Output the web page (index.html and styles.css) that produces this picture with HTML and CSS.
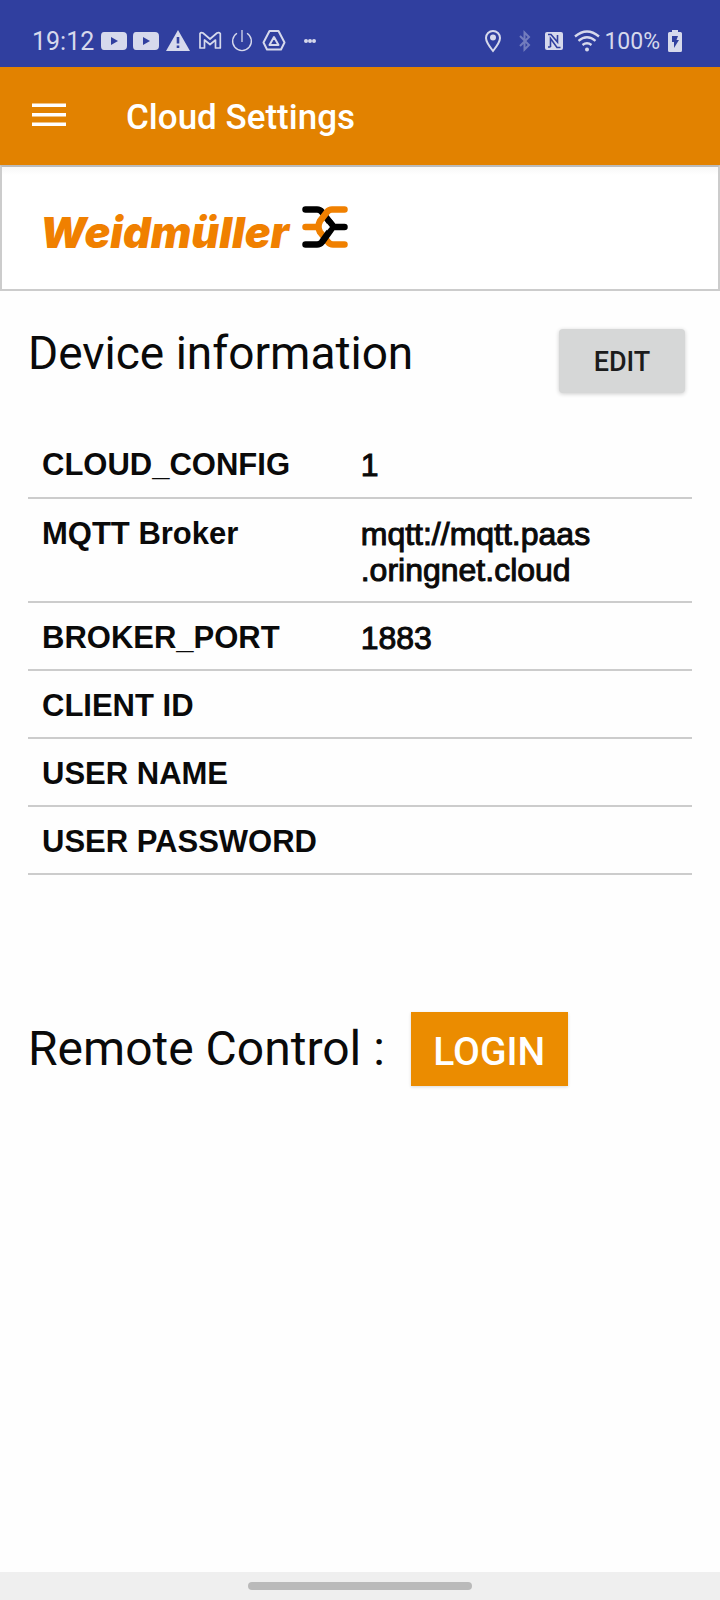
FILE: index.html
```html
<!DOCTYPE html>
<html lang="en">
<head>
<meta charset="utf-8">
<meta name="viewport" content="width=device-width, initial-scale=1">
<title>Cloud Settings</title>
<link rel="stylesheet" href="styles.css">
</head>
<body>
<div class="status">
  <span class="time">19:12</span>
  <svg class="left-icons" width="216" height="24" viewBox="0 0 216 24" fill="none" stroke="currentColor" aria-hidden="true">
    <g fill="currentColor" stroke="none">
      <path fill-rule="evenodd" d="M4 3H23Q27 3 27 7V17Q27 21 23 21H4Q1 21 1 17V7Q1 3 4 3ZM11 8V16L18 12Z"/>
      <path fill-rule="evenodd" d="M36 3H55Q59 3 59 7V17Q59 21 55 21H36Q33 21 33 17V7Q33 3 36 3ZM43 8V16L50 12Z"/>
      <path fill-rule="evenodd" d="M78 1L90 22H66ZM76.700 8V14.500H79.300V8ZM76.700 16.500V19H79.300V16.500Z"/>
      <circle cx="206" cy="12" r="2"/><circle cx="210" cy="12" r="2"/><circle cx="214" cy="12" r="2"/>
    </g>
    <path stroke-width="1.700" stroke-linejoin="round" d="M100 19V4.500Q101 3 103 4L110 10L117 4Q119 3 120.300 4.500V19H115.500V11L110 15.500L104.500 11V19Z"/>
    <path stroke-width="1.300" d="M142 1V13M137 4.200A9.400 9.400 0 1 0 147 4.200"/>
    <path stroke-width="2" stroke-linejoin="round" d="M169.500 2H178.500L184.500 13.500L181 20.500H167L163.500 13.500Z"/>
    <path stroke-width="2" stroke-linejoin="round" d="M174 8L178.500 16H169.500Z"/>
  </svg>
  <svg class="right-icons" width="118" height="24" viewBox="0 0 118 24" fill="none" stroke="currentColor" aria-hidden="true">
    <path stroke-width="2" d="M11 22C7 17 4 13 4 9A7 7 0 0 1 18 9C18 13 15 17 11 22Z"/>
    <circle cx="11" cy="8.500" r="3" fill="currentColor" stroke="none"/>
    <path class="dim" stroke-width="2" d="M38 7L47 16L42.500 20.500V3.500L47 8L38 17"/>
    <rect x="63" y="3" width="18" height="18" rx="2" fill="currentColor" stroke="none"/>
    <path class="cut" stroke-width="1.600" d="M66 5.500H69L75.500 13V6M68.500 18V9.500L75 18.500H78.500M68.500 18H66"/>
    <g stroke-width="2.300"><path d="M93 7.500Q105 -2.500 117 7.500"/><path d="M96.500 11.800Q105 4.800 113.500 11.800"/><path d="M100.500 16Q105 12.500 109.500 16"/></g>
    <circle cx="105" cy="20.500" r="2" fill="currentColor" stroke="none"/>
  </svg>
  <span class="percent">100%</span>
  <svg class="battery" width="14" height="24" viewBox="0 0 14 24" aria-hidden="true">
    <path fill="currentColor" fill-rule="evenodd" d="M4 1H10V3H12.500Q14 3 14 4.500V21.500Q14 23 12.500 23H1.500Q0 23 0 21.500V4.500Q0 3 1.500 3H4ZM4 7V13H6V19L11 11H8.500L10 7Z"/>
  </svg>
</div>
<header class="appbar">
  <button class="menu" type="button" aria-label="Menu">
    <svg width="34" height="24" viewBox="0 0 34 24" fill="currentColor"><path d="M0 .500H34V4H0ZM0 10H34V13.500H0ZM0 19.500H34V23H0Z"/></svg>
  </button>
  <h1 class="title">Cloud Settings</h1>
</header>
<div class="brand">
  <span class="wordmark">Weidmüller</span>
  <svg width="46" height="42" viewBox="0 0 46 42" fill="none" stroke-width="6.500" stroke-linecap="round" stroke-linejoin="round" aria-hidden="true">
    <path stroke="#000" d="M3.500 3.500H15Q18 3.500 20 6L30 19"/>
    <path stroke="#f08000" d="M42.500 3.500H30Q27 3.500 25 6L18 15Q15 21 18 26L26 36Q28 38.500 31 38.500H42.500M3.500 21H16"/>
    <path stroke="#000" d="M3.500 38.500H15Q18 38.500 20 36L30 22Q31 21 33 21H42.500M28 16.500L31 20"/>
    <path fill="#fff" d="M25 17.500L28 21L25 24.500L22 21Z"/>
  </svg>
</div>
<main class="content">
  <section class="section-head">
    <h2 class="heading">Device information</h2>
    <button class="edit" type="button">EDIT</button>
  </section>
  <table class="info">
    <tbody>
      <tr><th scope="row">CLOUD_CONFIG</th><td>1</td></tr>
      <tr><th scope="row">MQTT Broker</th><td>mqtt://mqtt.paas<br>.oringnet.cloud</td></tr>
      <tr><th scope="row">BROKER_PORT</th><td>1883</td></tr>
      <tr><th scope="row">CLIENT ID</th><td></td></tr>
      <tr><th scope="row">USER NAME</th><td></td></tr>
      <tr><th scope="row">USER PASSWORD</th><td></td></tr>
    </tbody>
  </table>
  <section class="remote">
    <h2 class="heading remote-heading">Remote Control :</h2>
    <button class="login" type="button">LOGIN</button>
  </section>
</main>
<footer class="navbar"><div class="handle"></div></footer>
</body>
</html>
```
FILE: styles.css
```css
* { box-sizing: border-box; }
body {
  margin: 0;
  min-height: 100vh;
  display: flex;
  flex-direction: column;
  background: #fefefe;
  color: #0a0a0a;
  font-family: Roboto, "Liberation Sans", sans-serif;
}
h1, h2 { margin: 0; }
button { border: 0; padding: 0; font-family: inherit; font-weight: 500; }
svg { display: block; flex: none; }
.status {
  display: flex;
  align-items: center;
  height: 67px;
  padding: 14px 38px 0 32px;
  background: #303f9f;
  color: #d6d9ec;
}
.time { padding-top: 2px; font-size: 25px; line-height: 28px; width: 68px; }
.right-icons { margin-left: auto; }
.dim { opacity: 0.4; }
.cut { stroke: #303f9f; }
.percent { padding-top: 2px; margin-left: 4px; font-size: 23px; line-height: 28px; }
.battery { margin-left: 8px; }
.appbar {
  display: flex;
  align-items: center;
  gap: 60px;
  height: 98px;
  padding: 0 32px;
  background: #e28200;
  color: #fff;
}
.menu { background: none; color: inherit; padding-bottom: 2px; }
.title { padding-top: 4px; font-size: 35px; line-height: 40px; font-weight: 500; }
.brand {
  display: flex;
  align-items: center;
  gap: 13px;
  height: 126px;
  padding: 0 38px 2px;
  border: 2px solid #ccc;
  border-top-color: #bbb;
  background: linear-gradient(#f7f7f7, #fff 8px);
}
.wordmark {
  padding-top: 10px;
  font-family: Inter, "Liberation Sans", sans-serif;
  font-size: 43px;
  line-height: 56px;
  font-weight: 900;
  font-style: italic;
  color: #f08000;
}
.content { flex: 1; padding: 32px 28px; }
.section-head {
  display: flex;
  justify-content: space-between;
  align-items: flex-start;
  padding-right: 7px;
  margin-bottom: 37px;
}
.heading { font-size: 46px; line-height: 60px; font-weight: 400; }
.edit {
  margin-top: 6px;
  padding-top: 2px;
  width: 126px;
  height: 64px;
  border-radius: 4px;
  background: #d6d7d7;
  color: #1c1c1c;
  font-size: 27px;
  box-shadow: 0 1px 4px rgba(0, 0, 0, 0.2);
}
.info {
  width: 100%;
  table-layout: fixed;
  border-collapse: collapse;
  font-family: "Liberation Sans", sans-serif;
  line-height: 36px;
  text-align: left;
}
.info th, .info td {
  height: 68px;
  padding: 17px 14px 13px;
  border-bottom: 2px solid #ccc;
  vertical-align: top;
}
.info th { width: 48%; font-size: 31px; font-weight: 700; }
.info td { font-size: 32px; -webkit-text-stroke: 1px currentColor; }
.remote { display: flex; align-items: center; gap: 26px; margin-top: 137px; }
.remote-heading { font-size: 48px; }
.login {
  width: 157px;
  height: 74px;
  padding-top: 6px;
  background: #eb8c00;
  color: #fff;
  font-size: 39px;
  box-shadow: 0 1px 3px rgba(0, 0, 0, 0.15);
}
.navbar {
  display: flex;
  justify-content: center;
  align-items: center;
  height: 28px;
  background: #efefef;
}
.handle { width: 224px; height: 8px; border-radius: 4px; background: #bababa; }
```
